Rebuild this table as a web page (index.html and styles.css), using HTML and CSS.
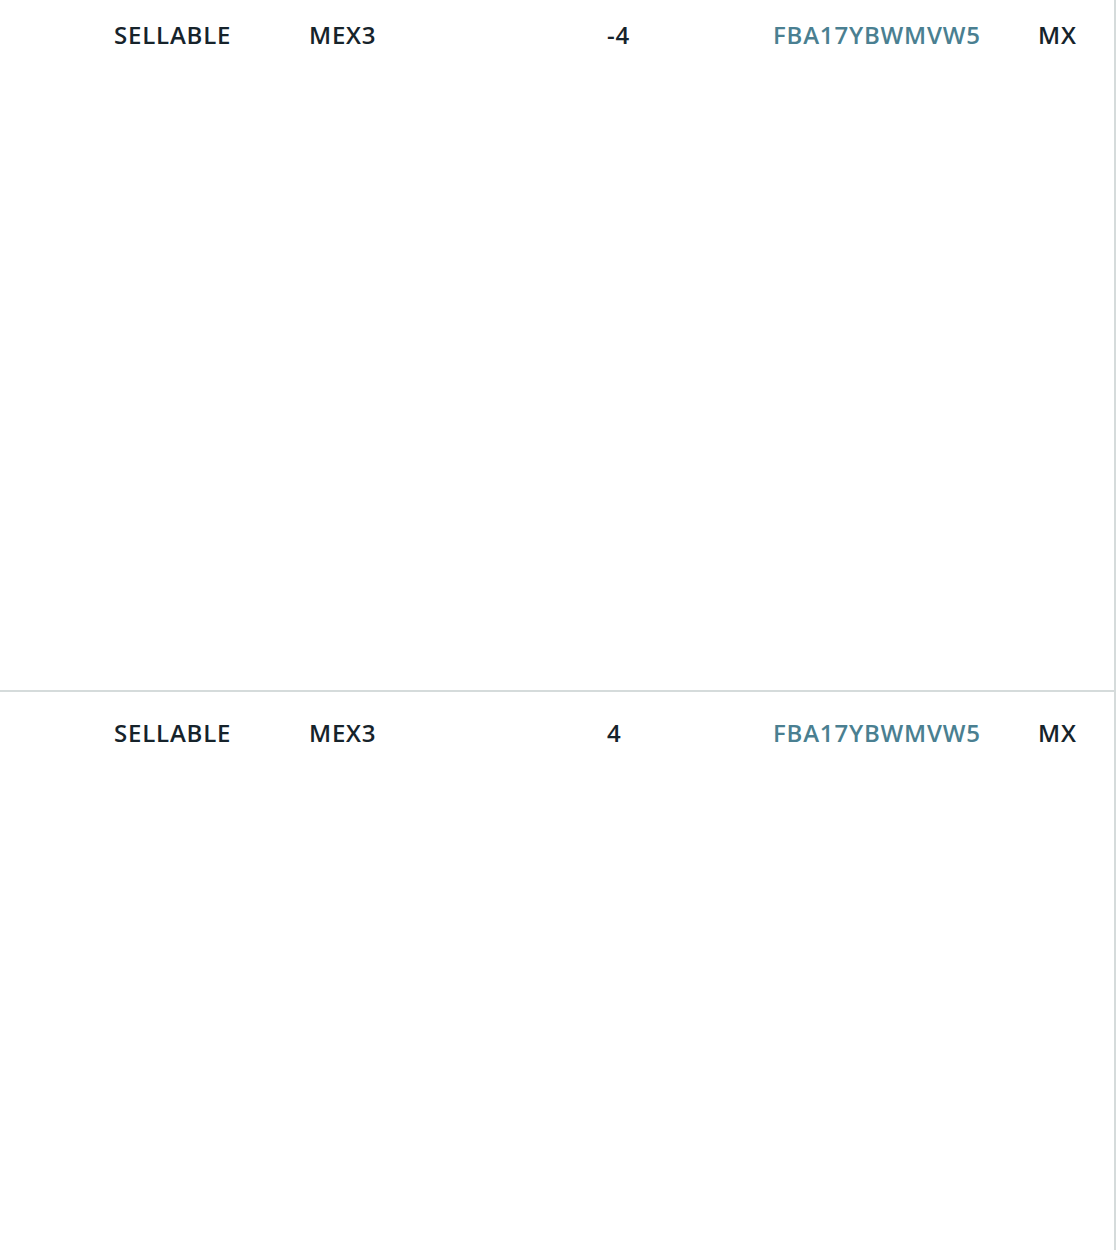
FILE: index.html
```html
<!DOCTYPE html>
<html lang="en">

<head>
    <meta charset="UTF-8">
    <meta name="viewport" content="width=device-width, initial-scale=1.0">
    <title>Inventory</title>
    <link rel="stylesheet" href="styles.css">
</head>

<body>
    <div class="tabela">
        <div class="linha primeira">
            <div class="celula">SELLABLE</div>
            <div class="celula">MEX3</div>
            <div class="celula">-4</div>
            <div class="celula"><a href="#">FBA17YBWMVW5</a></div>
            <div class="celula">MX</div>
        </div>
        <div class="linha">
            <div class="celula">SELLABLE</div>
            <div class="celula">MEX3</div>
            <div class="celula">4</div>
            <div class="celula"><a href="#">FBA17YBWMVW5</a></div>
            <div class="celula">MX</div>
        </div>
    </div>
</body>

</html>
```

FILE: styles.css
```css
body {
    margin: 0;
    background-color: #ffffff;
    color: #16232b;
    font-family: "Open Sans", "Noto Sans", sans-serif;
    font-size: 24px;
    font-weight: 600;
    letter-spacing: 0.8px;
}

.tabela {
    width: 1114px;
    height: 1250px;
    border-right: 2px solid #d5dbdb;
    display: flex;
    flex-direction: column;
}

.linha {
    display: grid;
    grid-template-columns: 195px 298px 166px 265px 1fr;
    align-items: start;
    padding-left: 114px;
    padding-top: 25px;
    flex: 1;
    border-top: 2px solid #d5dbdb;
}

.primeira {
    border-top: none;
    padding-top: 19px;
    flex: none;
    height: 671px;
}

.celula {
    line-height: 32px;
    white-space: nowrap;
}

a {
    color: #4a7f91;
    text-decoration: none;
}
```
